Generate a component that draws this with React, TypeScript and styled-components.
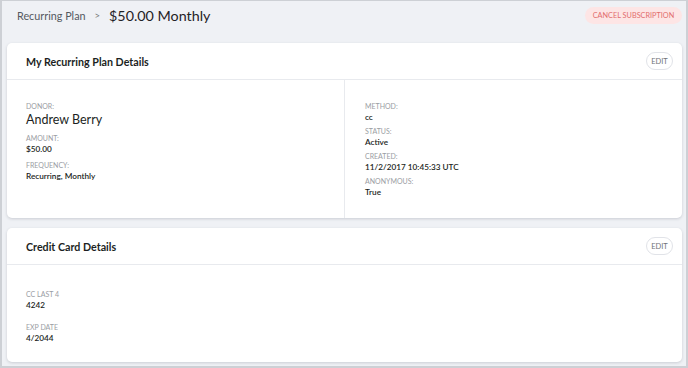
import React from 'react';
import styled, { createGlobalStyle } from 'styled-components';

const GlobalStyle = createGlobalStyle`
  * { box-sizing: border-box; }
  body {
    margin: 0;
    font-family: Lato, "Open Sans", sans-serif;
    background: #eff1f5;
  }
`;

type Field = { label: string; value: string; big?: boolean };

const donorFields: Field[] = [
    { label: 'Donor:', value: 'Andrew Berry', big: true },
    { label: 'Amount:', value: '$50.00' },
    { label: 'Frequency:', value: 'Recurring, Monthly' },
];

const planFields: Field[] = [
    { label: 'Method:', value: 'cc' },
    { label: 'Status:', value: 'Active' },
    { label: 'Created:', value: '11/2/2017 10:45:33 UTC' },
    { label: 'Anonymous:', value: 'True' },
];

const cardFields: Field[] = [
    { label: 'CC Last 4', value: '4242' },
    { label: 'Exp Date', value: '4/2044' },
];

const FieldList: React.FC<{ fields: Field[]; $gap: number }> = ({ fields, $gap }) => (
    <List $gap={$gap}>
        {fields.map(f => (
            <FieldItem key={f.label}>
                <Label>{f.label}</Label>
                <Value $big={f.big}>{f.value}</Value>
            </FieldItem>
        ))}
    </List>
);

const App: React.FC = () => {
    return (
        <Frame>
            <GlobalStyle />
            <Header>
                <Crumbs>
                    <Crumb>Recurring Plan</Crumb>
                    <Chevron>&gt;</Chevron>
                    <PageTitle>$50.00 Monthly</PageTitle>
                </Crumbs>
                <CancelButton>Cancel Subscription</CancelButton>
            </Header>
            <Cards>
                <Card>
                    <CardHeader>
                        <CardTitle>My Recurring Plan Details</CardTitle>
                        <EditButton>Edit</EditButton>
                    </CardHeader>
                    <SplitBody>
                        <Column>
                            <FieldList fields={donorFields} $gap={7} />
                        </Column>
                        <Column $divider>
                            <FieldList fields={planFields} $gap={5} />
                        </Column>
                    </SplitBody>
                </Card>
                <Card $grow>
                    <CardHeader>
                        <CardTitle>Credit Card Details</CardTitle>
                        <EditButton>Edit</EditButton>
                    </CardHeader>
                    <CardBody>
                        <FieldList fields={cardFields} $gap={13} />
                    </CardBody>
                </Card>
            </Cards>
        </Frame>
    );
};

export default App;

const Frame = styled.div`
  width: 688px;
  height: 368px;
  display: flex;
  flex-direction: column;
  background: #eff1f5;
  border-style: solid;
  border-color: #cdd0d5;
  border-width: 1px 2px 2px 2px;
  padding: 0 4px 4px 5px;
`;

const Header = styled.div`
  height: 42px;
  display: flex;
  align-items: flex-start;
  justify-content: space-between;
  padding: 5px 0 0 10px;
`;

const Crumbs = styled.div`
  display: flex;
  align-items: center;
  height: 18px;
`;

const Crumb = styled.span`
  font-size: 10.8px;
  color: #55595f;
`;

const Chevron = styled.span`
  font-size: 9.5px;
  color: #777;
  margin: 0 9px 0 9px;
`;

const PageTitle = styled.span`
  font-size: 14.3px;
  color: #1f2226;
`;

const CancelButton = styled.button`
  height: 17px;
  width: 97px;
  margin-top: 1px;
  border: none;
  border-radius: 9px;
  background: #fde5e5;
  color: #e26d6d;
  font-family: Lato, sans-serif;
  font-size: 7.3px;
  text-transform: uppercase;
  padding: 0;
`;

const Cards = styled.div`
  flex: 1;
  display: flex;
  flex-direction: column;
  gap: 10px;
`;

const Card = styled.div<{ $grow?: boolean }>`
  background: #fff;
  border-radius: 5px;
  box-shadow: 0 1px 3px rgba(40, 45, 60, 0.18);
  display: flex;
  flex-direction: column;
  flex: ${({ $grow }) => ($grow ? 1 : 'none')};
`;

const CardHeader = styled.div`
  height: 37px;
  display: flex;
  align-items: center;
  justify-content: space-between;
  padding: 0 9px 0 19px;
  border-bottom: 1px solid #e8eaee;
`;

const CardTitle = styled.h2`
  margin: 0;
  font-size: 10.7px;
  font-weight: 700;
  color: #1c1f23;
`;

const EditButton = styled.button`
  height: 18px;
  width: 27px;
  padding: 0;
  border: 1px solid #e1e3e8;
  border-radius: 9px;
  background: #fff;
  color: #707378;
  font-family: Lato, sans-serif;
  font-size: 7.5px;
  text-transform: uppercase;
`;

const SplitBody = styled.div`
  height: 138px;
  display: grid;
  grid-template-columns: 337px 1fr;
`;

const Column = styled.div<{ $divider?: boolean }>`
  padding: ${({ $divider }) => ($divider ? '22px 0 0 20px' : '22px 0 0 19px')};
  border-left: ${({ $divider }) => ($divider ? '1px solid #e8eaee' : 'none')};
`;

const CardBody = styled.div`
  flex: 1;
  padding: 25px 0 0 19px;
`;

const List = styled.div<{ $gap: number }>`
  display: flex;
  flex-direction: column;
  gap: ${({ $gap }) => $gap}px;
`;

const FieldItem = styled.div`
  display: flex;
  flex-direction: column;
  gap: 1px;
`;

const Label = styled.span`
  font-size: 7px;
  line-height: 9px;
  color: #9a9da3;
  text-transform: uppercase;
`;

const Value = styled.span<{ $big?: boolean }>`
  font-size: ${({ $big }) => ($big ? '12.5px' : '8.2px')};
  line-height: ${({ $big }) => ($big ? '15px' : '10px')};
  font-weight: ${({ $big }) => ($big ? 400 : 600)};
  color: #1c1f23;
`;
